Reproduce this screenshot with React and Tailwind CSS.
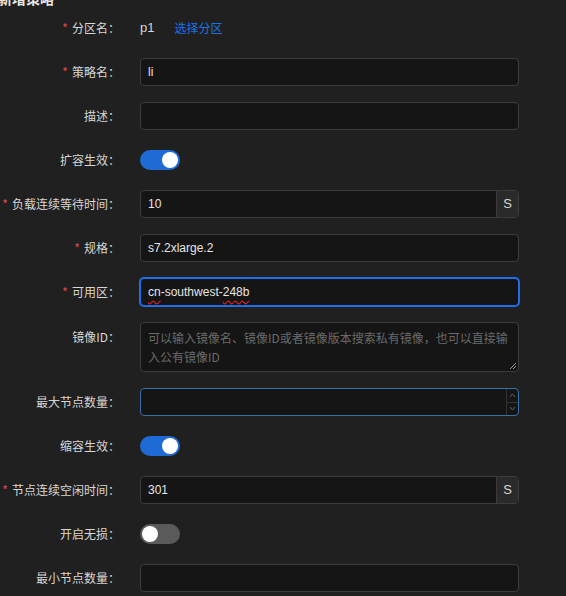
import React from 'react';

const font = { fontFamily: '"Noto Sans CJK SC", "Noto Sans", sans-serif' };
const latin = { fontFamily: '"Liberation Sans", "Noto Sans CJK SC", sans-serif' };

const Label = ({ required, children, top }) => (
  <div className={`w-[120px] shrink-0 flex justify-end text-[12px] text-[#d6d6d6] ${top ? 'pt-[6px] self-start' : ''}`}>
    {required && <span className="text-[#e5484d] mr-[4px] text-[12px]">*</span>}
    <span>{children}：</span>
  </div>
);

const Row = ({ label, required, top, children }) => (
  <div className={`flex ${top ? 'items-start' : 'items-center'} gap-[20px] mb-[16px] min-h-[28px]`}>
    <Label required={required} top={top}>{label}</Label>
    <div className="w-[379px] shrink-0">{children}</div>
  </div>
);

const Input = ({ value, focused, suffix }) => (
  <div
    className={`h-[28px] flex rounded-[4px] border bg-[#151515] overflow-hidden ${
      focused ? 'border-[#1f6feb] ring-1 ring-[#1f6feb]' : 'border-[#3c3c3c]'
    }`}
  >
    <div className="flex-1 flex items-center px-[7px] text-[12px] text-[#e6e6e6]" style={latin}>{value}</div>
    {suffix && (
      <div className="w-[22px] flex items-center justify-center bg-[#2a2a2a] border-l border-[#3c3c3c] text-[13px] text-[#d6d6d6]" style={latin}>
        {suffix}
      </div>
    )}
  </div>
);

const Toggle = ({ on }) => (
  <div className={`w-[40px] h-[20px] rounded-full flex items-center px-[2px] ${on ? 'bg-[#1f6bd6] justify-end' : 'bg-[#5a5a5a] justify-start'}`}>
    <div className="w-[16px] h-[16px] rounded-full bg-white" />
  </div>
);

export default function App() {
  return (
    <div className="w-[566px] h-[596px] bg-[#202020] overflow-hidden" style={font}>
      <div className="-mt-[9px] -ml-[2px] h-[15px] text-[14px] leading-[15px] font-bold text-[#e6e6e6]">新增策略</div>
      <div className="mt-[8px]">
        <Row label="分区名" required>
          <div className="flex items-center h-[28px] text-[13px]">
            <span className="text-[#d6d6d6]" style={latin}>p1</span>
            <span className="ml-[20px] text-[12px] text-[#1a73e8]">选择分区</span>
          </div>
        </Row>
        <Row label="策略名" required>
          <Input value="li" />
        </Row>
        <Row label="描述">
          <Input value="" />
        </Row>
        <Row label="扩容生效">
          <Toggle on />
        </Row>
        <Row label="负载连续等待时间" required>
          <Input value="10" suffix="S" />
        </Row>
        <Row label="规格" required>
          <Input value="s7.2xlarge.2" />
        </Row>
        <Row label="可用区" required>
          <Input
            focused
            value={
              <span>
                <span className="underline decoration-wavy decoration-[#e02020] underline-offset-[4px]">cn</span>-southwest-
                <span className="underline decoration-wavy decoration-[#e02020] underline-offset-[4px]">248b</span>
              </span>
            }
          />
        </Row>
        <Row label="镜像ID" top>
          <div className="relative h-[50px] rounded-[4px] border border-[#3c3c3c] bg-[#151515] px-[7px] py-[5px] text-[12px] leading-[19px] text-[#6a6a6a]">
            可以输入镜像名、镜像ID或者镜像版本搜索私有镜像，也可以直接输入公有镜像ID
            <svg className="absolute right-[1px] bottom-[1px]" width="8" height="8" viewBox="0 0 8 8">
              <path d="M7 1 L1 7 M7 4 L4 7" stroke="#9a9a9a" strokeWidth="1" />
            </svg>
          </div>
        </Row>
        <Row label="最大节点数量">
          <div className="h-[28px] flex rounded-[4px] border border-[#3a6ea8] bg-[#151515] overflow-hidden">
            <div className="flex-1" />
            <div className="w-[12px] flex flex-col border-l border-[#333]">
              <div className="flex-1 flex items-center justify-center">
                <svg width="7" height="5" viewBox="0 0 7 5"><path d="M1 4 L3.5 1 L6 4" fill="none" stroke="#666" strokeWidth="1" /></svg>
              </div>
              <div className="flex-1 flex items-center justify-center border-t border-[#333]">
                <svg width="7" height="5" viewBox="0 0 7 5"><path d="M1 1 L3.5 4 L6 1" fill="none" stroke="#666" strokeWidth="1" /></svg>
              </div>
            </div>
          </div>
        </Row>
        <Row label="缩容生效">
          <Toggle on />
        </Row>
        <Row label="节点连续空闲时间" required>
          <Input value="301" suffix="S" />
        </Row>
        <Row label="开启无损">
          <Toggle />
        </Row>
        <Row label="最小节点数量">
          <Input value="" />
        </Row>
      </div>
    </div>
  );
}
